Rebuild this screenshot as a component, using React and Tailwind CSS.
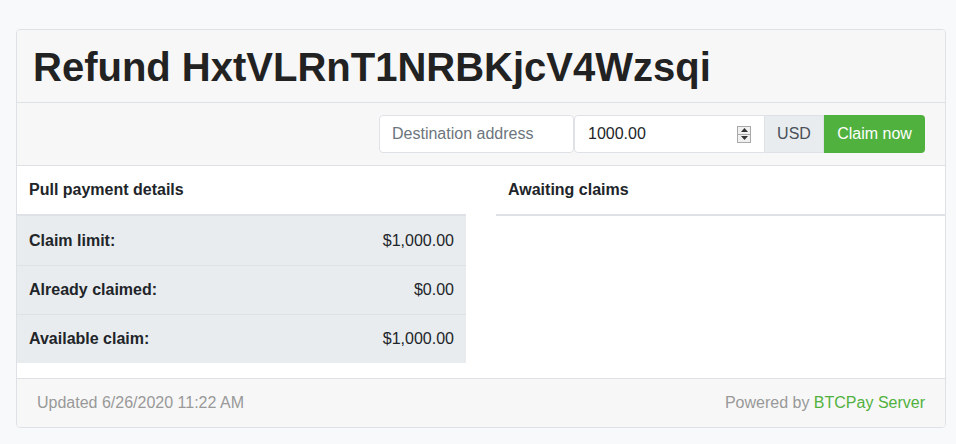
const Spinner = () => (
  <div className="flex flex-col w-[14px] h-[17px] border border-[#a9a9a9] bg-[#f0f0f0]">
    <div className="flex-1 flex items-center justify-center border-b border-[#a9a9a9]">
      <svg width="7" height="4" viewBox="0 0 7 4">
        <path d="M0 4 L3.5 0 L7 4 Z" fill="#333" />
      </svg>
    </div>
    <div className="flex-1 flex items-center justify-center">
      <svg width="7" height="4" viewBox="0 0 7 4">
        <path d="M0 0 L3.5 4 L7 0 Z" fill="#333" />
      </svg>
    </div>
  </div>
);

const rows = [
  { label: "Claim limit:", value: "$1,000.00" },
  { label: "Already claimed:", value: "$0.00" },
  { label: "Available claim:", value: "$1,000.00" },
];

export default function App() {
  return (
    <div
      className="min-h-[444px] bg-[#f8f9fa] pt-[29px] text-[#212529]"
      style={{ fontFamily: '"Liberation Sans", Arial, sans-serif' }}
    >
      <div className="ml-4 w-[930px] border border-[#dee2e6] rounded-[4px] overflow-hidden bg-white">
        {/* header */}
        <div className="h-[73px] bg-[#f7f7f7] border-b border-[#dee2e6] flex items-center px-4">
          <h1 className="text-[40px] leading-none font-bold text-[#222] pt-[2px]">
            Refund HxtVLRnT1NRBKjcV4Wzsqi
          </h1>
        </div>

        {/* claim form */}
        <div className="h-[63px] bg-[#f7f7f7] border-b border-[#dee2e6] flex items-center justify-end pr-5">
          <div className="flex h-[38px] text-base">
            <div className="w-[195px] bg-white border border-[#dee2e6] rounded-[4px] flex items-center px-3 text-[#6c757d]">
              Destination address
            </div>
            <div className="w-[191px] bg-white border border-[#dee2e6] rounded-l-[4px] flex items-center justify-between pl-[13px] pr-[13px] text-[#212529]">
              <span>1000.00</span>
              <Spinner />
            </div>
            <div className="w-[59px] bg-[#e9ecef] border border-l-0 border-[#dee2e6] flex items-center justify-center text-[#495057]">
              USD
            </div>
            <button className="w-[101px] bg-[#51b13e] text-white rounded-r-[4px] flex items-center justify-center">
              Claim now
            </button>
          </div>
        </div>

        {/* details */}
        <div className="grid grid-cols-2 gap-[30px] pb-[15px]">
          <div>
            <div className="h-[50px] border-b-2 border-[#dee2e6] flex items-center px-3 font-bold">
              Pull payment details
            </div>
            {rows.map((r, i) => (
              <div
                key={r.label}
                className={`h-[49px] bg-[#e9ecef] flex items-center justify-between px-3 ${
                  i > 0 ? "border-t border-[#dee2e6]" : ""
                }`}
              >
                <span className="font-bold">{r.label}</span>
                <span>{r.value}</span>
              </div>
            ))}
          </div>
          <div>
            <div className="h-[50px] border-b-2 border-[#dee2e6] flex items-center px-3 font-bold">
              Awaiting claims
            </div>
          </div>
        </div>

        {/* footer */}
        <div className="h-[49px] bg-[#f7f7f7] border-t border-[#dee2e6] flex items-center justify-between px-5 text-[#999]">
          <span>Updated 6/26/2020 11:22 AM</span>
          <span>
            Powered by <span className="text-[#51b13e]">BTCPay Server</span>
          </span>
        </div>
      </div>
    </div>
  );
}
